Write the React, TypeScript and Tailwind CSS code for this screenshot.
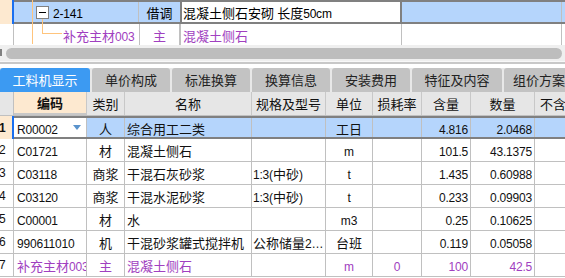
import React from "react";

const CJK_RE = /([\u2E80-\u9FFF\u3000-\u303F\uFF00-\uFFEF]+)/;

// mixed text: CJK runs in Noto, latin runs in Liberation Sans
function Mix({ text }: { text: string }) {
  return (
    <span className="whitespace-pre">
      {text.split(CJK_RE).filter(Boolean).map((part, i) =>
        CJK_RE.test(part) ? (
          <span key={i} className="font-['Noto_Sans_CJK_SC',sans-serif] text-[13px]">
            {part}
          </span>
        ) : (
          <span key={i} className="font-['Liberation_Sans',sans-serif] text-[12px] tracking-[-0.2px]">
            {part}
          </span>
        )
      )}
    </span>
  );
}

type Row = {
  code: string;
  type: string;
  name: string;
  spec?: string;
  unit: string;
  loss?: string;
  qty: string;
  amt: string;
  purple?: boolean;
};

const rows: Row[] = [
  { code: "R00002", type: "人", name: "综合用工二类", unit: "工日", qty: "4.816", amt: "2.0468" },
  { code: "C01721", type: "材", name: "混凝土侧石", unit: "m", qty: "101.5", amt: "43.1375" },
  { code: "C03118", type: "商浆", name: "干混石灰砂浆", spec: "1:3(中砂)", unit: "t", qty: "1.435", amt: "0.60988" },
  { code: "C03120", type: "商浆", name: "干混水泥砂浆", spec: "1:3(中砂)", unit: "t", qty: "0.233", amt: "0.09903" },
  { code: "C00001", type: "材", name: "水", unit: "m3", qty: "0.25", amt: "0.10625" },
  { code: "990611010", type: "机", name: "干混砂浆罐式搅拌机", spec: "公称储量2…", unit: "台班", qty: "0.119", amt: "0.05058" },
  { code: "补充主材003", type: "主", name: "混凝土侧石", unit: "m", loss: "0", qty: "100", amt: "42.5", purple: true },
];

const tabs = ["工料机显示", "单价构成", "标准换算", "换算信息", "安装费用", "特征及内容", "组价方案"];
const tabWidths = ["w-[90px]", "w-[78px]", "w-[78px]", "w-[78px]", "w-[78px]", "w-[90px]", "w-[70px]"];

const cols = [
  { label: "编码", w: "w-[73px]" },
  { label: "类别", w: "w-[38px]" },
  { label: "名称", w: "w-[127px]" },
  { label: "规格及型号", w: "w-[74px]" },
  { label: "单位", w: "w-[47px]" },
  { label: "损耗率", w: "w-[49px]" },
  { label: "含量", w: "w-[49px]" },
  { label: "数量", w: "w-[64px]" },
];

function TopGrid() {
  return (
    <div className="relative h-[45px]">
      {/* row 1 - selected quota row */}
      <div className="flex h-[24px]">
        <div className="w-[14px] shrink-0 bg-[#fde9d0] border-r-2 border-[#1a6ff0]" />
        <div className="flex flex-1 border-y-2 border-[#808080] bg-[#b5d5fc]">
          <div className="w-[125px] shrink-0 border-r border-[#c0c0c0] flex items-center pl-[22px]">
            <div className="w-[13px] h-[13px] border border-[#808080] bg-white flex items-center justify-center mr-[4px] relative z-10">
              <div className="w-[7px] h-px bg-black" />
            </div>
            <Mix text="2-141" />
          </div>
          <div className="w-[41px] shrink-0 flex items-center justify-center">
            <Mix text="借调" />
          </div>
          <div className="w-[222px] shrink-0 bg-white border-x-2 border-[#808080] flex items-center pl-[1px] overflow-hidden">
            <Mix text="混凝土侧石安砌 长度50cm" />
          </div>
          <div className="w-[160px] shrink-0 border-r border-[#c0c0c0]" />
        </div>
      </div>
      {/* row 2 - child material */}
      <div className="flex h-[21px] text-[#a040c0]">
        <div className="w-[14px] shrink-0 border-r border-[#c0c0c0]" />
        <div className="w-[126px] shrink-0 border-r border-[#c0c0c0] flex items-center pl-[49px]">
          <Mix text="补充主材003" />
        </div>
        <div className="w-[41px] shrink-0 border-r-2 border-[#c0c0c0] flex items-center justify-center">
          <Mix text="主" />
        </div>
        <div className="w-[221px] shrink-0 border-r border-[#c0c0c0] flex items-center pl-[2px]">
          <Mix text="混凝土侧石" />
        </div>
        <div className="w-[160px] shrink-0 border-r border-[#c0c0c0]" />
      </div>
      {/* tree lines */}
      <div className="absolute left-[32px] top-0 w-px h-[44px] bg-[#ffc47c]" />
      <div className="absolute left-[42px] top-[18px] w-px h-[16px] bg-[#ffc47c]" />
      <div className="absolute left-[42px] top-[33px] w-[20px] h-px bg-[#ffc47c]" />
    </div>
  );
}

function ScrollStrip() {
  return (
    <div className="h-[23px] flex flex-col">
      <div className="h-[16px] bg-[#efefef] flex items-center relative">
        <div className="absolute left-0 top-[4px] w-[2px] h-[7px] bg-[#808080]" />
        <div className="ml-[6px] w-[556px] h-[11px] rounded-full bg-[#bdbdbd]" />
      </div>
      <div className="h-px bg-[#f8f8f8]" />
      <div className="h-[2px] bg-[#c8c8c8]" />
      <div className="flex-1 bg-white" />
    </div>
  );
}

function Tabs() {
  return (
    <div className="flex gap-[2px] h-[24px] bg-[#e8e8e8]">
      {tabs.map((t, i) => (
        <div
          key={t}
          className={
            (i === 0 ? "bg-[#3c9af2] text-white " : "bg-[#c3c3c3] text-[#222] ") +
            tabWidths[i] +
            " shrink-0 rounded-t-[3px] flex items-center justify-center font-['Noto_Sans_CJK_SC',sans-serif] text-[13px] whitespace-nowrap overflow-hidden"
          }
        >
          {t}
        </div>
      ))}
    </div>
  );
}

function Header() {
  return (
    <div className="flex h-[24px] bg-[#e6e6e6] border-b border-[#c0c0c0] font-['Noto_Sans_CJK_SC',sans-serif] text-[13px] text-[#111]">
      <div className="w-[14px] shrink-0 border-r border-[#c0c0c0]" />
      {cols.map((c, i) => (
        <div
          key={c.label}
          className={
            c.w +
            (i === 0
              ? " bg-[#fde9d0] font-bold border-b-2 border-[#1a6ff0]"
              : "") +
            " shrink-0 border-r border-[#c8c8c8] flex items-center justify-center whitespace-nowrap overflow-hidden"
          }
        >
          {c.label}
        </div>
      ))}
      <div className="w-[30px] shrink-0 flex items-center pl-[5px] whitespace-nowrap">不含</div>
    </div>
  );
}

function DataRow({ r, i }: { r: Row; i: number }) {
  const sel = i === 0;
  const cell = "shrink-0 border-r border-[#c0c0c0] flex items-center whitespace-nowrap overflow-hidden";
  return (
    <div className={"flex h-[23px] " + (r.purple ? "text-[#a040c0]" : "text-[#111]")}>
      <div
        className={
          "w-[14px] shrink-0 flex items-center font-['Liberation_Sans',sans-serif] text-[12px] text-[#111] " +
          (sel ? "bg-[#fde9d0] border-r-2 border-[#1a6ff0] font-bold" : "border-r border-[#c0c0c0] border-b")
        }
      >
        <span className="-ml-[1px]">{i + 1}</span>
      </div>
      <div className={"flex flex-1 " + (sel ? "border-y-2 border-[#808080] bg-[#b5d5fc]" : "border-b border-[#c0c0c0]")}>
        <div className={"w-[73px] pl-[3px] relative " + cell + (sel ? " bg-white" : "")}>
          <Mix text={r.code} />
          {sel && (
            <div className="absolute left-[59px] top-[7px] w-0 h-0 border-x-[4px] border-x-transparent border-t-[5px] border-t-[#5a93cc]" />
          )}
        </div>
        <div className={"w-[38px] justify-center " + cell}>
          <Mix text={r.type} />
        </div>
        <div className={"w-[127px] pl-[2px] " + cell}>
          <Mix text={r.name} />
        </div>
        <div className={"w-[74px] pl-[1px] " + cell}>
          <Mix text={r.spec ?? ""} />
        </div>
        <div className={"w-[47px] justify-center " + cell}>
          <Mix text={r.unit} />
        </div>
        <div className={"w-[49px] justify-center " + cell}>
          <Mix text={r.loss ?? ""} />
        </div>
        <div className={"w-[49px] justify-end pr-[2px] " + cell}>
          <Mix text={r.qty} />
        </div>
        <div className={"w-[64px] justify-end pr-[2px] " + cell}>
          <Mix text={r.amt} />
        </div>
        <div className={"w-[40px] " + cell} />
      </div>
    </div>
  );
}

export default function App() {
  return (
    <div className="w-[565px] h-[278px] overflow-hidden bg-white select-none">
      <TopGrid />
      <ScrollStrip />
      <Tabs />
      <Header />
      {rows.map((r, i) => (
        <DataRow key={i} r={r} i={i} />
      ))}
    </div>
  );
}
